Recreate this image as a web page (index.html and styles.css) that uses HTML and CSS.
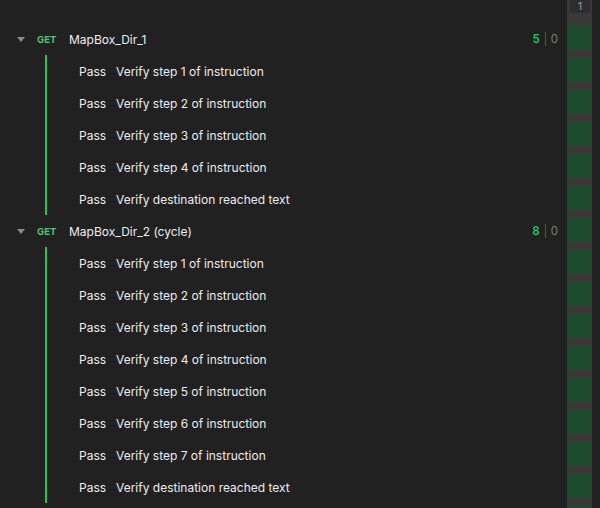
FILE: index.html
```html
<!DOCTYPE html>
<html>
<head>
<meta charset="utf-8">
<link rel="stylesheet" href="styles.css">
</head>
<body>
<div class="app">
  <div class="results">
    <div class="group">
      <div class="head">
        <span class="caret"></span>
        <span class="method">GET</span>
        <span class="name">MapBox_Dir_1</span>
        <span class="counts"><span class="pass">5</span><span class="sep"></span><span class="fail">0</span></span>
      </div>
      <div class="tests">
        <div class="test"><span class="status">Pass</span><span class="title">Verify step 1 of instruction</span></div>
        <div class="test"><span class="status">Pass</span><span class="title">Verify step 2 of instruction</span></div>
        <div class="test"><span class="status">Pass</span><span class="title">Verify step 3 of instruction</span></div>
        <div class="test"><span class="status">Pass</span><span class="title">Verify step 4 of instruction</span></div>
        <div class="test"><span class="status">Pass</span><span class="title">Verify destination reached text</span></div>
      </div>
    </div>
    <div class="group">
      <div class="head">
        <span class="caret"></span>
        <span class="method">GET</span>
        <span class="name">MapBox_Dir_2 (cycle)</span>
        <span class="counts"><span class="pass">8</span><span class="sep"></span><span class="fail">0</span></span>
      </div>
      <div class="tests">
        <div class="test"><span class="status">Pass</span><span class="title">Verify step 1 of instruction</span></div>
        <div class="test"><span class="status">Pass</span><span class="title">Verify step 2 of instruction</span></div>
        <div class="test"><span class="status">Pass</span><span class="title">Verify step 3 of instruction</span></div>
        <div class="test"><span class="status">Pass</span><span class="title">Verify step 4 of instruction</span></div>
        <div class="test"><span class="status">Pass</span><span class="title">Verify step 5 of instruction</span></div>
        <div class="test"><span class="status">Pass</span><span class="title">Verify step 6 of instruction</span></div>
        <div class="test"><span class="status">Pass</span><span class="title">Verify step 7 of instruction</span></div>
        <div class="test"><span class="status">Pass</span><span class="title">Verify destination reached text</span></div>
      </div>
    </div>
  </div>
  <div class="minimap">
    <div class="iter">1</div>
    <div class="blocks">
      <div class="block"></div><div class="block"></div><div class="block"></div><div class="block"></div>
      <div class="block"></div><div class="block"></div><div class="block"></div><div class="block"></div>
      <div class="block"></div><div class="block"></div><div class="block"></div><div class="block"></div>
      <div class="block"></div><div class="block"></div><div class="block"></div><div class="block"></div>
    </div>
  </div>
</div>
</body>
</html>
```

FILE: styles.css
```css
html, body {
  margin: 0;
  padding: 0;
  background: #212121;
  height: 100%;
  overflow: hidden;
}
body {
  font-family: Inter, "Liberation Sans", sans-serif;
  font-size: 12px;
  color: #ececec;
}
.app {
  display: flex;
  height: 508px;
  padding-right: 8px;
}
.results {
  flex: 1;
  padding-top: 23px;
  padding-right: 9px;
}
.head {
  height: 32px;
  display: flex;
  align-items: center;
}
.caret {
  width: 0;
  height: 0;
  margin-left: 17px;
  border-left: 4px solid transparent;
  border-right: 4px solid transparent;
  border-top: 5px solid #8a8a8a;
  margin-top: 1px;
}
.method {
  margin-left: 12px;
  font-size: 9.5px;
  font-weight: 700;
  color: #4fc46c;
  width: 32px;
}
.name {
  color: #ededed;
}
.counts {
  margin-left: auto;
  display: flex;
  align-items: center;
  font-size: 11.5px;
}
.pass {
  color: #22c55e;
  font-weight: 600;
}
.sep {
  width: 1px;
  height: 14px;
  background: #555555;
  margin: 0 5px 0 5px;
}
.fail {
  color: #7d7d7d;
}
.tests {
  margin-left: 45px;
  border-left: 2px solid #22c55e;
}
.test {
  height: 32px;
  display: flex;
  align-items: center;
  padding-left: 32px;
}
.status {
  width: 37px;
}
.minimap {
  width: 25px;
  background: #383838;
  display: flex;
  flex-direction: column;
}
.iter {
  height: 14px;
  margin: 0 2px 0 3px;
  background: #2d2d2d;
  border-radius: 0 0 4px 4px;
  color: #9a9a9a;
  font-size: 11px;
  line-height: 13px;
  text-align: center;
}
.blocks {
  margin-top: 13px;
  margin-left: 1px;
  display: flex;
  flex-direction: column;
  gap: 8px;
}
.block {
  height: 24px;
  flex-shrink: 0;
  background: #1e4a2e;
}
```
